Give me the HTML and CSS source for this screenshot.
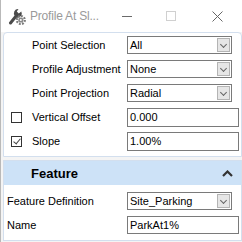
FILE: index.html
```html
<!DOCTYPE html>
<html lang="en">
<head>
    <meta charset="UTF-8">
    <title>Profile At Slope</title>
    <link rel="stylesheet" href="styles.css">
</head>
<body>
    <div class="window">
        <div class="titlebar">
            <svg class="app-icon" width="18" height="18" viewBox="0 0 18 18">
                <path d="M2.5 16 L8.5 8.5" fill="none" stroke="#4a4a4a" stroke-width="3" stroke-linecap="round"/>
                <path d="M7 9 A4.2 4.2 0 0 1 10.5 2 L8.8 4.6 L10.8 6.4 L13.3 4.5 A4.2 4.2 0 0 1 8.5 10.5 Z" fill="#4a4a4a"/>
                <circle cx="12.8" cy="13" r="4" fill="none" stroke="#7a7a7a" stroke-width="2.2" stroke-dasharray="1.8 1.3"/>
                <circle cx="12.8" cy="13" r="2.6" fill="#8a8a8a"/>
                <circle cx="12.8" cy="13" r="1" fill="#ffffff"/>
            </svg>
            <span class="title">Profile At Sl...</span>
            <span class="ctrl minimize"></span>
            <span class="ctrl maximize"></span>
            <svg class="ctrl close" width="11" height="11" viewBox="0 0 11 11">
                <path d="M0.5 0.5 L10.5 10.5 M10.5 0.5 L0.5 10.5" stroke="#666" stroke-width="1"/>
            </svg>
        </div>

        <div class="panel settings">
            <div class="row">
                <span class="label indent">Point Selection</span>
                <div class="select">All<span class="drop"></span></div>
            </div>
            <div class="row">
                <span class="label indent">Profile Adjustment</span>
                <div class="select">None<span class="drop"></span></div>
            </div>
            <div class="row">
                <span class="label indent">Point Projection</span>
                <div class="select">Radial<span class="drop"></span></div>
            </div>
            <div class="row">
                <span class="label check"><span class="box"></span>Vertical Offset</span>
                <div class="field tall">0.000</div>
            </div>
            <div class="row">
                <span class="label check"><span class="box checked"></span>Slope</span>
                <div class="field tall">1.00%</div>
            </div>
        </div>

        <div class="panel feature">
            <div class="header">
                <span>Feature</span>
                <svg width="11" height="7" viewBox="0 0 11 7">
                    <path d="M1 6 L5.5 1.5 L10 6" fill="none" stroke="#333" stroke-width="2.2"/>
                </svg>
            </div>
            <div class="body">
                <div class="row">
                    <span class="label plain">Feature Definition</span>
                    <div class="select">Site_Parking<span class="drop"></span></div>
                </div>
                <div class="row">
                    <span class="label plain">Name</span>
                    <div class="field">ParkAt1%</div>
                </div>
            </div>
        </div>
    </div>
</body>
</html>
```

FILE: styles.css
```css
body {
    margin: 0;
    font-family: "Liberation Sans", Arial, sans-serif;
    font-size: 11px;
    color: #000000;
    background: #ffffff;
}

.window {
    width: 242px;
    height: 242px;
    overflow: hidden;
    box-sizing: border-box;
    border-left: 1px solid #b9b9b9;
    background: #f4f4f4;
}

.titlebar {
    height: 32px;
    background: #ffffff;
    display: flex;
    align-items: center;
    padding-left: 7px;
}

.app-icon {
    margin-right: 4px;
}

.title {
    font-size: 12px;
    letter-spacing: -0.2px;
    color: #9a9a9a;
    width: 92px;
}

.ctrl {
    display: block;
}

.minimize {
    width: 10px;
    height: 1px;
    background: #6a6a6a;
    margin-right: 34px;
}

.maximize {
    width: 8px;
    height: 8px;
    border: 1px solid #d0d0d0;
    margin-right: 36px;
}

.panel {
    margin-left: 2px;
    margin-right: 0;
    border: 1px solid #d3dfee;
    background: #ffffff;
}

.settings {
    border-radius: 4px 4px 0 0;
    padding-bottom: 3px;
}

.feature {
    margin-top: 3px;
}

.row {
    height: 24px;
    display: flex;
    align-items: center;
}

.label {
    width: 123px;
    flex: none;
    display: flex;
    align-items: center;
}

.indent {
    padding-left: 28px;
    box-sizing: border-box;
}

.check {
    padding-left: 7px;
    box-sizing: border-box;
}

.plain {
    padding-left: 3px;
    box-sizing: border-box;
}

.box {
    width: 11px;
    height: 11px;
    box-sizing: border-box;
    border: 1px solid #333333;
    margin-right: 10px;
    position: relative;
}

.box.checked::after {
    content: "";
    position: absolute;
    left: 3px;
    top: 0px;
    width: 3px;
    height: 6px;
    border: solid #444444;
    border-width: 0 1px 1px 0;
    transform: rotate(40deg);
}

.select, .field {
    height: 18px;
    box-sizing: border-box;
    border: 1px solid #7a7a7a;
    display: flex;
    align-items: center;
    padding-left: 2px;
}

.select {
    width: 105px;
    position: relative;
}

.field {
    width: 112px;
}

.field.tall {
    height: 19px;
}

.drop {
    position: absolute;
    right: 1px;
    top: 1px;
    bottom: 1px;
    width: 13px;
    box-sizing: border-box;
    background: #e6e6e6;
    border: 1px solid #b4b4b4;
}

.drop::after {
    content: "";
    position: absolute;
    left: 3px;
    top: 3px;
    width: 4px;
    height: 4px;
    border: solid #666666;
    border-width: 0 1px 1px 0;
    transform: rotate(45deg);
}

.header {
    height: 24px;
    background: #cde2f7;
    display: flex;
    align-items: center;
    justify-content: space-between;
    padding: 0 8px 0 27px;
    font-size: 13px;
    font-weight: bold;
}

.feature .body {
    padding-top: 4px;
    padding-bottom: 3px;
}
```
